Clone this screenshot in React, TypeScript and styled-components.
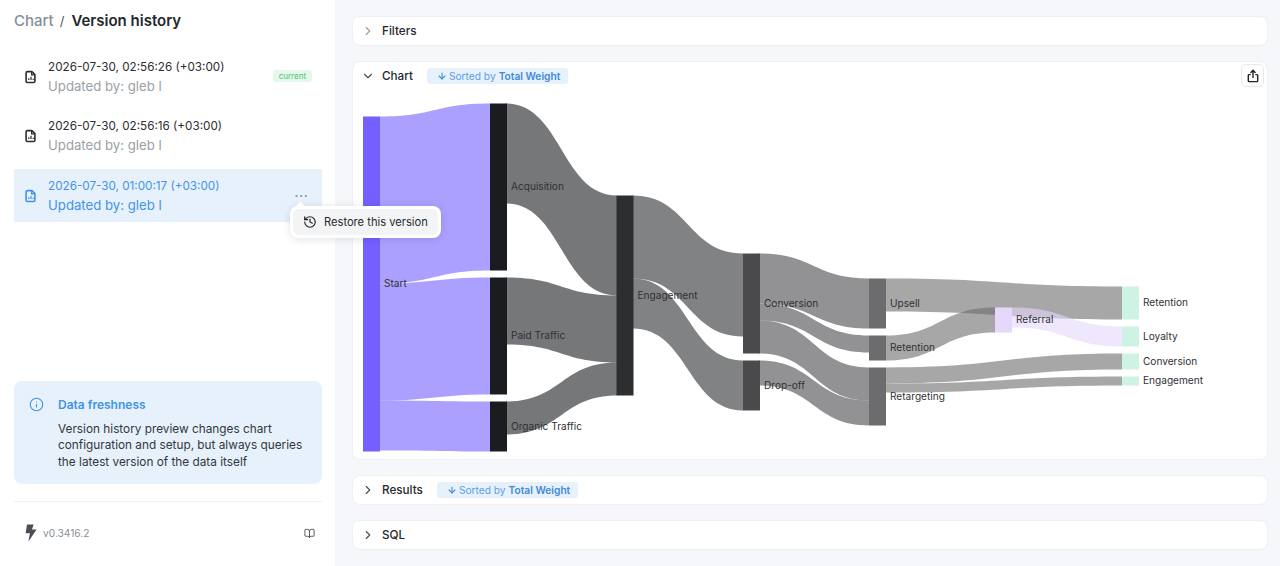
import React, { FC } from 'react';
import styled, { createGlobalStyle } from 'styled-components';
import { ArrowDown, BookOpen, ChevronDown, ChevronRight, Ellipsis, History, Info } from 'lucide-react';

const GlobalStyle = createGlobalStyle`
  html, body {
    margin: 0;
    height: 100%;
  }
  body {
    background: #f5f7fa;
    font-family: Inter, "Liberation Sans", sans-serif;
    color: #1f2328;
    overflow: hidden;
  }
  * {
    box-sizing: border-box;
  }
`;

interface SankeyNode {
  label: string;
  x: number;
  y0: number;
  y1: number;
  color: string;
}

const nodes: SankeyNode[] = [
  { label: 'Start', x: 363, y0: 116, y1: 451, color: '#7360ff' },
  { label: 'Acquisition', x: 490, y0: 103, y1: 270, color: '#1b1c1f' },
  { label: 'Paid Traffic', x: 490, y0: 277, y1: 394, color: '#1b1c1f' },
  { label: 'Organic Traffic', x: 490, y0: 401, y1: 451, color: '#1b1c1f' },
  { label: 'Engagement', x: 616.5, y0: 195, y1: 395, color: '#2d2e30' },
  { label: 'Conversion', x: 743, y0: 253, y1: 353, color: '#4a4a4c' },
  { label: 'Drop-off', x: 743, y0: 360, y1: 410, color: '#4a4a4c' },
  { label: 'Upsell', x: 869, y0: 278, y1: 328, color: '#6c6c6e' },
  { label: 'Retention', x: 869, y0: 335, y1: 360, color: '#6c6c6e' },
  { label: 'Retargeting', x: 869, y0: 367, y1: 425, color: '#6c6c6e' },
  { label: 'Referral', x: 995, y0: 307, y1: 332, color: '#e4d9fb' },
  { label: 'Retention', x: 1122, y0: 286, y1: 319, color: '#cff3e3' },
  { label: 'Loyalty', x: 1122, y0: 326, y1: 346, color: '#cff3e3' },
  { label: 'Conversion', x: 1122, y0: 353, y1: 369, color: '#cff3e3' },
  { label: 'Engagement', x: 1122, y0: 376, y1: 385, color: '#cff3e3' },
];

// x of source right edge, x of target left edge, source top, target top, band height
const links: Array<[number, number, number, number, number, string]> = [
  [380, 490, 116, 103, 167, '#7360ff'],
  [380, 490, 283, 277, 117, '#7360ff'],
  [380, 490, 400, 401, 50, '#7360ff'],
  [506, 617, 103, 195, 100, '#1b1c1f'],
  [506, 617, 277, 295, 67, '#1b1c1f'],
  [506, 617, 401, 362, 33, '#1b1c1f'],
  [633, 743, 195, 253, 83, '#2d2e30'],
  [633, 743, 278, 360, 50, '#2d2e30'],
  [759, 869, 253, 278, 50, '#4a4a4c'],
  [759, 869, 303, 335, 17, '#4a4a4c'],
  [759, 869, 320, 367, 33, '#4a4a4c'],
  [759, 869, 360, 400, 25, '#4a4a4c'],
  [886, 1122, 278, 286, 33, '#6c6c6e'],
  [886, 995, 335, 307, 25, '#6c6c6e'],
  [886, 1122, 367, 353, 16, '#6c6c6e'],
  [886, 1122, 383, 376, 9, '#6c6c6e'],
  [1012, 1122, 307, 326, 20, '#e4d9fb'],
];

const linkPath = (x0: number, x1: number, s: number, t: number, h: number) => {
  const mid = (x0 + x1) / 2;
  return `M${x0} ${s}C${mid} ${s} ${mid} ${t} ${x1} ${t}L${x1} ${t + h}C${mid} ${t + h} ${mid} ${s + h} ${x0} ${s + h}Z`;
};

const NODE_WIDTH = 17;

const FileChartIcon: FC<{ color: string }> = ({ color }) => (
  <svg width="14" height="14" viewBox="0 0 14 14" fill="none">
    <path
      d="M3.4 1.6h4.5l3 3v6.6a1.3 1.3 0 0 1-1.3 1.3H3.4a1.3 1.3 0 0 1-1.3-1.3V2.9a1.3 1.3 0 0 1 1.3-1.3z"
      stroke={color}
      strokeWidth="1.6"
      strokeLinejoin="round"
    />
    <path d="M7.6 1.8v3h3" stroke={color} strokeWidth="1.2" />
    <path d="M4.8 10V8.2M7 10V6.8M9.2 10V8.8" stroke={color} strokeWidth="1.2" />
  </svg>
);

const BoltIcon = () => (
  <svg width="14" height="18" viewBox="0 0 14 18">
    <path d="M3 0.5h6.6L8 5.6h4.6L4.4 17.4l1.5-8.2H1.6z" fill="#4b4f55" />
  </svg>
);

const ShareIcon = () => (
  <svg width="14" height="14" viewBox="0 0 14 14" fill="none" stroke="#222" strokeWidth="1.4" strokeLinecap="round" strokeLinejoin="round">
    <path d="M4.2 5.6H3.2a.9.9 0 0 0-.9.9v5.2c0 .5.4.9.9.9h7.6a.9.9 0 0 0 .9-.9V6.5a.9.9 0 0 0-.9-.9H9.8" />
    <path d="M7 8.4V1.4M4.9 3.4 7 1.3l2.1 2.1" />
  </svg>
);

const versions = [
  { time: '2026-07-30, 02:56:26 (+03:00)', current: true, active: false },
  { time: '2026-07-30, 02:56:16 (+03:00)', current: false, active: false },
  { time: '2026-07-30, 01:00:17 (+03:00)', current: false, active: true },
];

const SortBadge = () => (
  <Badge>
    <ArrowDown size={10} strokeWidth={2.6} color="#3f8ad8" />
    <span>Sorted by</span>
    <b>Total Weight</b>
  </Badge>
);

export default function App() {
  return (
    <Page>
      <GlobalStyle />
      <Sidebar>
        <Breadcrumb>
          <Crumb>Chart</Crumb>
          <Slash>/</Slash>
          <Title>Version history</Title>
        </Breadcrumb>

        <VersionList>
          {versions.map((v) => (
            <VersionRow key={v.time} $active={v.active}>
              <FileChartIcon color={v.active ? '#3f94e8' : '#2b2d31'} />
              <VersionText>
                <VersionTime $active={v.active}>{v.time}</VersionTime>
                <VersionAuthor $active={v.active}>Updated by: gleb l</VersionAuthor>
              </VersionText>
              {v.current && <CurrentTag>current</CurrentTag>}
              {v.active && (
                <MoreButton>
                  <Ellipsis size={16} strokeWidth={1.4} color="#8a9099" />
                </MoreButton>
              )}
              {v.active && (
                <Popover>
                  <PopoverItem>
                    <History size={14} strokeWidth={2} color="#222" />
                    Restore this version
                  </PopoverItem>
                </Popover>
              )}
            </VersionRow>
          ))}
        </VersionList>

        <InfoBox>
          <Info size={15} color="#3f94e8" strokeWidth={1.8} />
          <InfoBody>
            <InfoTitle>Data freshness</InfoTitle>
            <InfoText>
              Version history preview changes chart configuration and setup, but always queries the
              latest version of the data itself
            </InfoText>
          </InfoBody>
        </InfoBox>

        <Footer>
          <FooterVersion>
            <BoltIcon />
            v0.3416.2
          </FooterVersion>
          <BookOpen size={11} color="#4b4f55" />
        </Footer>
      </Sidebar>

      <Main>
        <Panel>
          <PanelHeader>
            <ChevronRight size={14} color="#9aa0a6" />
            <PanelTitle>Filters</PanelTitle>
          </PanelHeader>
        </Panel>

        <ChartPanel>
          <ChartHeader>
            <ChevronDown size={14} color="#4b4f55" />
            <PanelTitle>Chart</PanelTitle>
            <SortBadge />
            <ShareButton>
              <ShareIcon />
            </ShareButton>
          </ChartHeader>
          <SankeySvg viewBox="353 89.5 914 369.5">
            {links.map(([x0, x1, s, t, h, color], i) => (
              <path key={i} d={linkPath(x0, x1, s, t, h)} fill={color} fillOpacity={0.6} />
            ))}
            {nodes.map((n) => (
              <rect
                key={`${n.label}-${n.x}`}
                x={n.x}
                y={n.y0}
                width={NODE_WIDTH}
                height={n.y1 - n.y0}
                fill={n.color}
              />
            ))}
            {nodes.map((n) => (
              <SankeyLabel
                key={`${n.label}-${n.x}-text`}
                x={n.x + NODE_WIDTH + 4}
                y={(n.y0 + n.y1) / 2 + 0.6}
                dominantBaseline="middle"
              >
                {n.label}
              </SankeyLabel>
            ))}
          </SankeySvg>
        </ChartPanel>

        <Panel>
          <PanelHeader>
            <ChevronRight size={14} color="#4b4f55" />
            <PanelTitle>Results</PanelTitle>
            <SortBadge />
          </PanelHeader>
        </Panel>

        <Panel>
          <PanelHeader>
            <ChevronRight size={14} color="#4b4f55" />
            <PanelTitle>SQL</PanelTitle>
          </PanelHeader>
        </Panel>
      </Main>
    </Page>
  );
}

const Page = styled.div`
  display: flex;
  width: 1280px;
  height: 566px;
  overflow: hidden;
`;

const Sidebar = styled.aside`
  width: 335px;
  flex-shrink: 0;
  height: 100%;
  background: #fff;
  padding: 0 13px 0 14px;
  display: flex;
  flex-direction: column;
`;

const Breadcrumb = styled.div`
  display: flex;
  align-items: baseline;
  height: 40px;
  padding-top: 11px;
  font-size: 15px;
`;

const Crumb = styled.span`
  color: #868e96;
  font-weight: 500;
`;

const Slash = styled.span`
  color: #555;
  font-size: 13px;
  margin: 0 7px 0 6px;
`;

const Title = styled.span`
  color: #24272b;
  font-weight: 600;
`;

const VersionList = styled.div`
  margin-top: 10px;
  display: flex;
  flex-direction: column;
  gap: 6.5px;
`;

const VersionRow = styled.div<{ $active: boolean }>`
  position: relative;
  display: flex;
  align-items: center;
  gap: 10px;
  height: 53px;
  padding: 0 10px;
  background: ${(p) => (p.$active ? '#e7f1fb' : 'transparent')};
`;

const VersionText = styled.div`
  flex: 1;
  display: flex;
  flex-direction: column;
  gap: 3px;
`;

const VersionTime = styled.div<{ $active: boolean }>`
  font-size: 11.7px;
  line-height: 16px;
  color: ${(p) => (p.$active ? '#3f94e8' : '#2b2d31')};
`;

const VersionAuthor = styled.div<{ $active: boolean }>`
  font-size: 13.2px;
  line-height: 17px;
  color: ${(p) => (p.$active ? '#3f94e8' : '#9a9fa5')};
`;

const CurrentTag = styled.span`
  position: relative;
  top: -0.5px;
  font-size: 8px;
  line-height: 12px;
  padding: 0 6px;
  border-radius: 3px;
  background: #e6f8ec;
  color: #4cc26d;
`;

const MoreButton = styled.span`
  display: flex;
  margin-right: 3.5px;
`;

const Popover = styled.div`
  position: absolute;
  top: 37px;
  left: 276px;
  width: 151px;
  height: 32px;
  padding: 3px;
  background: #fff;
  border-radius: 8px;
  box-shadow: 0 1px 8px rgba(0, 0, 0, 0.12);
  z-index: 5;

  &::before {
    content: '';
    position: absolute;
    top: -3px;
    left: 7px;
    width: 7px;
    height: 7px;
    background: #fff;
    transform: rotate(45deg);
  }
`;

const PopoverItem = styled.div`
  position: relative;
  display: flex;
  align-items: center;
  gap: 7px;
  height: 26px;
  padding: 0 10px;
  border-radius: 6px;
  background: #f3f4f6;
  font-size: 11.15px;
  color: #26292d;
  white-space: nowrap;

  svg {
    flex-shrink: 0;
  }
`;

const InfoBox = styled.div`
  margin-top: auto;
  display: flex;
  gap: 14px;
  height: 103px;
  padding: 16px 15px;
  background: #e7f1fb;
  border-radius: 8px;
`;

const InfoBody = styled.div`
  flex: 1;
`;

const InfoTitle = styled.div`
  font-size: 12px;
  line-height: 15px;
  font-weight: 600;
  color: #3f94e8;
`;

const InfoText = styled.div`
  margin-top: 8.5px;
  font-size: 11.8px;
  line-height: 16.5px;
  color: #33373c;
`;

const Footer = styled.div`
  margin-top: 17px;
  height: 65px;
  border-top: 1px solid #f0f1f3;
  display: flex;
  align-items: center;
  justify-content: space-between;
  padding: 0 7px 2px 10px;
`;

const FooterVersion = styled.div`
  display: flex;
  align-items: center;
  gap: 5px;
  font-size: 10.2px;
  color: #8a8f96;
`;

const Main = styled.main`
  flex: 1;
  min-width: 0;
  padding: 15.5px 12px 0 17px;
  display: flex;
  flex-direction: column;
  gap: 14.5px;
`;

const Panel = styled.section`
  background: #fff;
  border: 1px solid #eef0f3;
  border-radius: 8px;
  height: 30.5px;
  flex-shrink: 0;
`;

const ChartPanel = styled(Panel)`
  height: 399.5px;
`;

const PanelHeader = styled.div`
  position: relative;
  display: flex;
  align-items: center;
  height: 28.5px;
  padding-left: 8px;
`;

const ChartHeader = styled(PanelHeader)`
  height: 28px;
`;

const PanelTitle = styled.span`
  margin-left: 7px;
  font-size: 11.7px;
  font-weight: 500;
  color: #24272b;
`;

const Badge = styled.span`
  display: inline-flex;
  align-items: center;
  margin-left: 14px;
  height: 16px;
  padding: 0 8px 0 10px;
  border-radius: 3px;
  background: #e7f1fb;
  color: #5a9fe6;
  font-size: 10.2px;
  white-space: nowrap;

  span {
    margin-left: 2px;
  }

  b {
    margin-left: 3px;
    font-weight: 600;
    color: #3f8ad8;
  }
`;

const ShareButton = styled.button`
  position: absolute;
  top: 2.5px;
  right: 3px;
  width: 23px;
  height: 23px;
  display: flex;
  align-items: center;
  justify-content: center;
  padding: 0;
  background: #fff;
  border: 1px solid #e6e8eb;
  border-radius: 5px;
`;

const SankeySvg = styled.svg`
  display: block;
  width: 914px;
  height: 369.5px;
`;

const SankeyLabel = styled.text`
  font-family: Inter, "Liberation Sans", sans-serif;
  font-size: 10.1px;
  fill: #2f3135;
`;
